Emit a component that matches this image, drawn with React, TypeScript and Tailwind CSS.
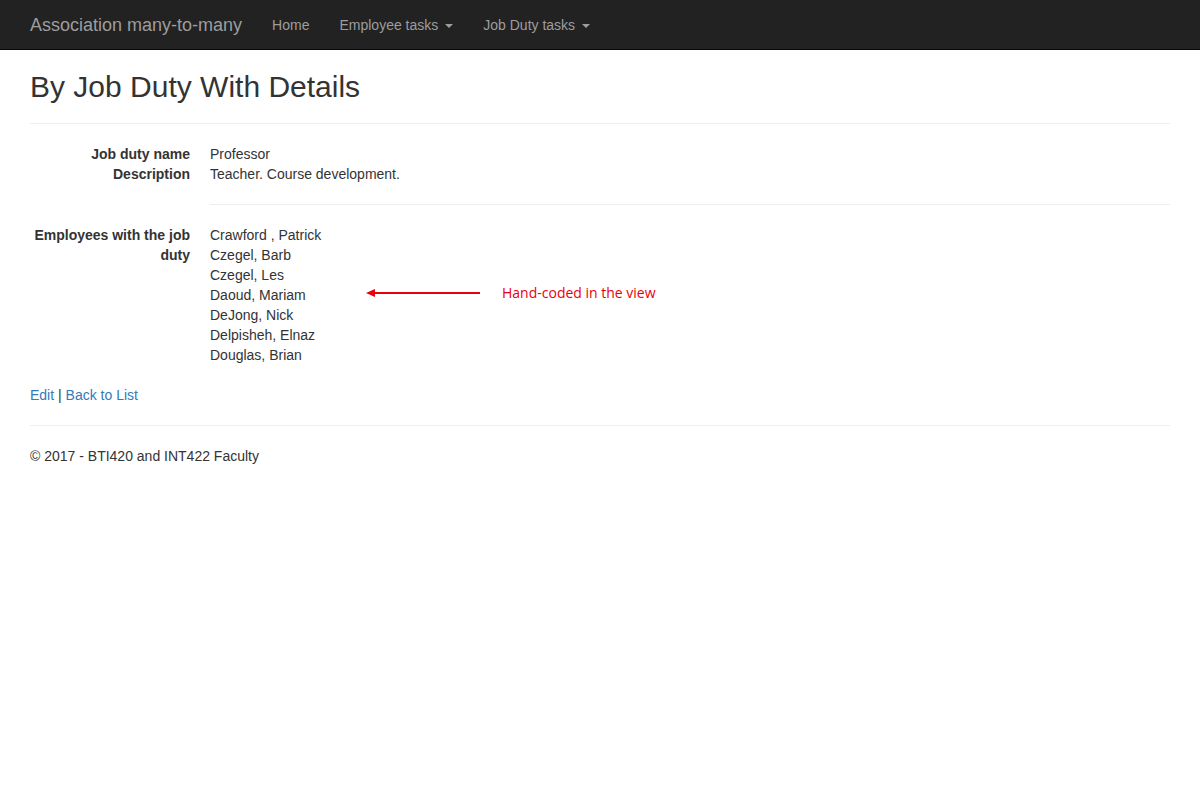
export default function App() {
  const employees = [
    'Crawford , Patrick',
    'Czegel, Barb',
    'Czegel, Les',
    'Daoud, Mariam',
    'DeJong, Nick',
    'Delpisheh, Elnaz',
    'Douglas, Brian',
  ];

  const caret = (
    <span className="ml-[7px] inline-block h-0 w-0 align-middle border-x-4 border-t-4 border-x-transparent border-t-[#9d9d9d]" />
  );

  return (
    <div className="min-h-screen bg-white text-[14px] leading-5 text-[#333] font-['Liberation_Sans',Arial,sans-serif]">
      {/* Navbar */}
      <nav className="h-[50px] bg-[#222] border-b border-[#080808]">
        <div className="mx-auto flex h-[49px] w-[1170px] items-center px-[15px]">
          <a className="text-[18px] leading-5 text-[#9d9d9d]">Association many-to-many</a>
          <div className="ml-[15px] flex">
            <a className="px-[15px] text-[#9d9d9d]">Home</a>
            <a className="px-[15px] text-[#9d9d9d]">Employee tasks{caret}</a>
            <a className="px-[15px] text-[#9d9d9d]">Job Duty tasks{caret}</a>
          </div>
        </div>
      </nav>

      <div className="mx-auto w-[1170px] px-[15px]">
        <h2 className="mt-5 text-[30px] leading-[33px]">By Job Duty With Details</h2>
        <hr className="mt-5 mb-5 border-t border-[#eee]" />

        <dl className="mb-5">
          <div className="flex">
            <dt className="w-[160px] shrink-0 text-right font-bold">Job duty name</dt>
            <dd className="ml-5">Professor</dd>
          </div>
          <div className="flex">
            <dt className="w-[160px] shrink-0 text-right font-bold">Description</dt>
            <dd className="ml-5">Teacher. Course development.</dd>
          </div>
          <div className="flex">
            <dt className="w-[160px] shrink-0" />
            <dd className="ml-5 flex-1">
              <hr className="my-5 border-t border-[#eee]" />
            </dd>
          </div>
          <div className="flex">
            <dt className="w-[160px] shrink-0 text-right font-bold">Employees with the job duty</dt>
            <dd className="relative ml-5 flex-1">
              {employees.map((e) => (
                <div key={e}>{e}</div>
              ))}
              {/* annotation */}
              <div className="absolute left-[156px] top-[60px] flex items-center">
                <svg width="116" height="10" viewBox="0 0 116 10">
                  <line x1="6" y1="5" x2="114" y2="5" stroke="#e8000b" strokeWidth="2" />
                  <polygon points="0,5 9,1 9,9" fill="#e8000b" />
                </svg>
                <span className="ml-[20px] text-[14px] leading-4 text-[#e8000b] font-['Open_Sans',sans-serif]">
                  Hand-coded in the view
                </span>
              </div>
            </dd>
          </div>
        </dl>

        <p className="mb-[10px]">
          <a className="text-[#337ab7]">Edit</a> | <a className="text-[#337ab7]">Back to List</a>
        </p>
        <hr className="mt-5 mb-5 border-t border-[#eee]" />
        <footer>
          <p>© 2017 - BTI420 and INT422 Faculty</p>
        </footer>
      </div>
    </div>
  );
}
